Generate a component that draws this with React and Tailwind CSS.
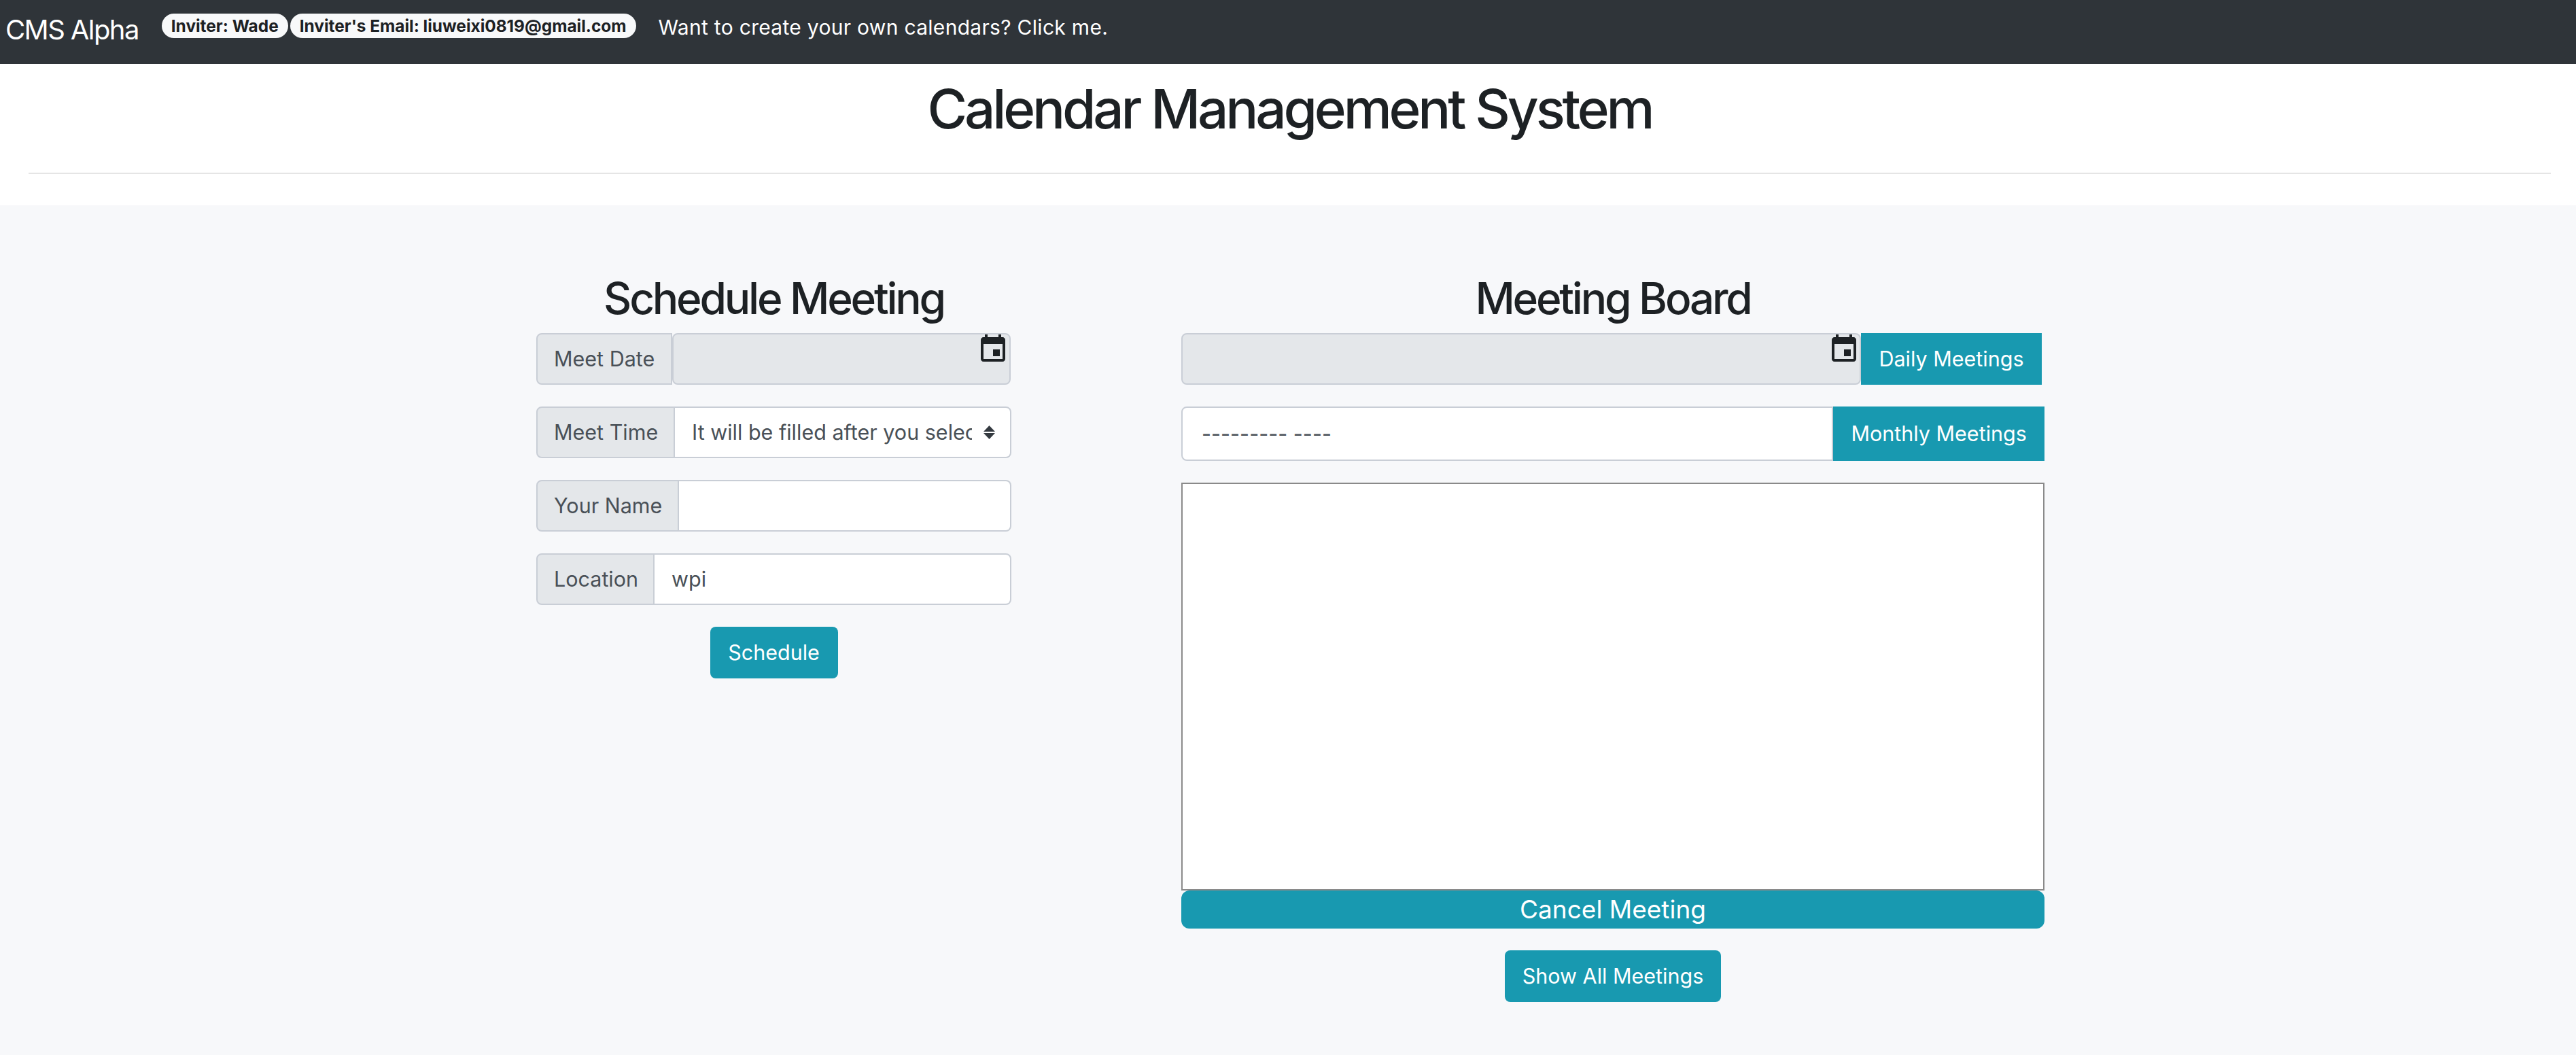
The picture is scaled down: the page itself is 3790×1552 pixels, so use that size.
import { useState } from "react";

const FONT = "font-['Inter','Liberation_Sans',sans-serif]";

function CalendarIcon({ className }) {
  return (
    <svg viewBox="0 0 24 24" className={className} fill="#1d2124">
      <path d="M17 12h-5v5h5v-5zM16 1v2H8V1H6v2H5c-1.11 0-1.99.9-1.99 2L3 19c0 1.1.89 2 2 2h14c1.1 0 2-.9 2-2V5c0-1.1-.9-2-2-2h-1V1h-2zm3 18H5V8h14v11z" />
    </svg>
  );
}

function Label({ children, w }) {
  return (
    <span className={`flex h-full shrink-0 items-center rounded-l-lg border-2 border-[#c9ced6] bg-[#e4e7ea] pl-[24px] text-[30.5px] text-[#495057] ${w}`}>
      {children}
    </span>
  );
}

function DateBox({ className, iconClass }) {
  return (
    <div className={`relative rounded-lg border-2 border-[#c9ced6] bg-[#e4e7ea] ${className}`}>
      <CalendarIcon className={`absolute ${iconClass}`} />
    </div>
  );
}

function Button({ children, className }) {
  return (
    <button className={`flex items-center justify-center bg-[#1899b0] text-[30.5px] text-white ${className}`}>
      {children}
    </button>
  );
}

export default function App() {
  const [name, setName] = useState("");
  const [location, setLocation] = useState("wpi");

  return (
    <div className={`${FONT} min-h-[1552px] bg-white text-[#1d2124]`}>
      {/* nav */}
      <nav className="flex h-[94px] bg-[#2f3439] pt-[20px]">
        <span className="ml-[8px] text-[40px] leading-[48px] tracking-[-1.6px] text-white">CMS Alpha</span>
        <div className="ml-[34px] flex h-[36px] gap-[3px]">
          <span className="flex items-center rounded-full bg-[#f8f9fa] px-[14px] text-[24.4px] font-bold">Inviter: Wade</span>
          <span className="flex items-center rounded-full bg-[#f8f9fa] px-[14px] text-[24.4px] font-bold">Inviter's Email: liuweixi0819@gmail.com</span>
        </div>
        <a className="ml-[33px] mt-[2px] text-[30px] leading-[36px] tracking-[0.3px] text-white">Want to create your own calendars? Click me.</a>
      </nav>

      {/* title */}
      <header className="h-[208px] bg-white pl-[42px] pr-[37px] pt-[18px]">
        <h1 className="text-center text-[80px] font-medium leading-[96px] tracking-[-4.2px]">Calendar Management System</h1>
        <hr className="mt-[46px] border-t-2 border-[#e5e5e5]" />
      </header>

      {/* main */}
      <main className="flex h-[1250px] gap-[250px] bg-[#f7f8fa] pl-[789px] pt-[90px]">
        <section className="flex w-[699px] flex-col">
          <h3 className="h-[98px] text-center text-[64px] font-medium leading-[94px] tracking-[-3.25px]">Schedule Meeting</h3>
          <div className="flex h-[76px] w-[698px]">
            <Label w="w-[200px]">Meet Date</Label>
            <DateBox className="grow" iconClass="right-0 top-[-2px] size-[48px]" />
          </div>
          <div className="mt-[32px] flex h-[76px]">
            <Label w="w-[204px]">Meet Time</Label>
            <div className="flex grow items-center justify-between rounded-r-lg border-2 border-l-0 border-[#c9ced6] bg-white pl-[25px] pr-[22px] text-[30.5px] text-[#495057]">
              <span className="w-[412px] overflow-hidden whitespace-nowrap">It will be filled after you select a date</span>
              <svg viewBox="0 0 17 20" className="h-[20px] w-[17px]" fill="#343a40">
                <path d="M8.5 0L17 9H0zM8.5 20L0 11h17z" />
              </svg>
            </div>
          </div>
          <div className="mt-[32px] flex h-[76px]">
            <Label w="w-[210px]">Your Name</Label>
            <input
              value={name}
              onChange={(e) => setName(e.target.value)}
              className="min-w-0 grow rounded-r-lg border-2 border-l-0 border-[#c9ced6] bg-white px-[25px] text-[30.5px] text-[#495057]"
            />
          </div>
          <div className="mt-[32px] flex h-[76px]">
            <Label w="w-[174px]">Location</Label>
            <input
              value={location}
              onChange={(e) => setLocation(e.target.value)}
              className="min-w-0 grow rounded-r-lg border-2 border-l-0 border-[#c9ced6] bg-white px-[25px] text-[30.5px] text-[#495057]"
            />
          </div>
          <Button className="mx-auto mt-[32px] h-[76px] w-[188px] rounded-lg">Schedule</Button>
        </section>

        <section className="flex w-[1270px] flex-col">
          <h3 className="h-[98px] text-center text-[64px] font-medium leading-[94px] tracking-[-3.25px]">Meeting Board</h3>
          <div className="flex h-[76px]">
            <DateBox className="w-[1000px]" iconClass="right-[-1px] top-[-2px] size-[48px]" />
            <Button className="w-[266px]">Daily Meetings</Button>
          </div>
          <div className="mt-[32px] flex h-[80px]">
            <div className="flex w-[960px] items-center rounded-l-lg border-2 border-[#c9ced6] bg-white pl-[28px] text-[30.5px] text-[#495057]">
              --------- ----
            </div>
            <Button className="w-[311px]">Monthly Meetings</Button>
          </div>
          <div className="mt-[32px] h-[600px] border-2 border-[#8a8a8a] bg-white" />
          <Button className="h-[56px] rounded-xl text-[37px]!">Cancel Meeting</Button>
          <Button className="mx-auto mt-[32px] h-[76px] w-[318px] rounded-lg">Show All Meetings</Button>
        </section>
      </main>
    </div>
  );
}
